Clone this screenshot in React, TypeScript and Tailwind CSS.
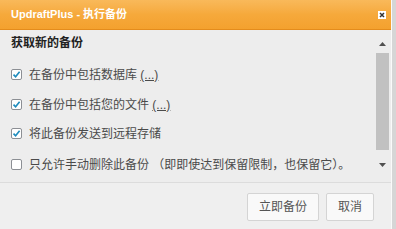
import React from "react";

const font = { fontFamily: '"Liberation Sans", "Noto Sans CJK SC", sans-serif' };

function Check({ checked }: { checked: boolean }) {
  return (
    <span className="flex h-[11px] w-[11px] shrink-0 items-center justify-center rounded-[2px] border border-[#8c8f94] bg-white">
      {checked && (
        <svg width="9" height="9" viewBox="0 0 9 9">
          <path d="M1.5 4.6 L3.6 6.8 L7.6 1.8" fill="none" stroke="#1e8cbe" strokeWidth="1.6" />
        </svg>
      )}
    </span>
  );
}

function Row({ checked, h, children }: { checked: boolean; h: string; children: React.ReactNode }) {
  return (
    <div className={`flex items-center gap-[7px] pl-[11px] ${h}`}>
      <Check checked={checked} />
      <span className="text-[12px] leading-[14px] text-[#4a4a4a]">{children}</span>
    </div>
  );
}

export default function App() {
  return (
    <div className="flex h-[229px] w-[396px] bg-[#d6d6d6]" style={font}>
      <div className="flex w-[392px] flex-col border-r border-[#fafafa] bg-[#ededed]">
        <div className="flex h-[30px] shrink-0 items-center justify-between border-b border-[#e48c1c] bg-gradient-to-b from-[#f9b95a] via-[#f6a93b] to-[#f4a12e] pl-[11px] pr-[5px]">
          <span className="text-[11px] font-bold text-white" style={font}>
            UpdraftPlus - 执行备份
          </span>
          <span className="flex h-[8px] w-[8px] items-center justify-center bg-white">
            <svg width="6" height="6" viewBox="0 0 6 6">
              <path d="M1 1 L5 5 M5 1 L1 5" stroke="#333" strokeWidth="1.5" />
            </svg>
          </span>
        </div>
        <div className="flex h-[152px] shrink-0">
          <div className="flex flex-1 flex-col">
            <div className="pl-[11px] pt-[5px] pb-[9px] text-[12px] font-bold leading-[16px] text-[#222]">获取新的备份</div>
            <Row checked h="h-[29px]">
              在备份中包括数据库 <span className="underline">(...)</span>
            </Row>
            <Row checked h="h-[31px]">
              在备份中包括您的文件 <span className="underline">(...)</span>
            </Row>
            <Row checked h="h-[27px]">
              将此备份发送到远程存储
            </Row>
            <Row checked={false} h="h-[35px]">
              只允许手动删除此备份 （即即使达到保留限制，也保留它）。
            </Row>
          </div>
          <div className="mr-[2px] flex w-[13px] flex-col items-center">
            <div className="flex h-[23px] w-full items-center justify-center pt-[4px]">
              <svg width="7" height="4" viewBox="0 0 7 4">
                <path d="M0 4 L3.5 0 L7 4 Z" fill="#505050" />
              </svg>
            </div>
            <div className="h-[97px] w-full bg-[#c1c1c1]" />
            <div className="flex flex-1 w-full items-center justify-center pb-[2px]">
              <svg width="7" height="4" viewBox="0 0 7 4">
                <path d="M0 0 L3.5 4 L7 0 Z" fill="#505050" />
              </svg>
            </div>
          </div>
        </div>
        <div className="flex flex-1 items-start justify-end gap-[7px] border-t border-[#dcdcdc] bg-[#efefef] pr-[17px] pt-[10px]">
          <button className="h-[28px] w-[72px] rounded-[2px] border border-[#d4d4d4] bg-[#f9f9f9] text-[12px] text-[#555]" style={font}>
            立即备份
          </button>
          <button className="h-[28px] w-[48px] rounded-[2px] border border-[#d4d4d4] bg-[#f9f9f9] text-[12px] text-[#555]" style={font}>
            取消
          </button>
        </div>
      </div>
    </div>
  );
}
